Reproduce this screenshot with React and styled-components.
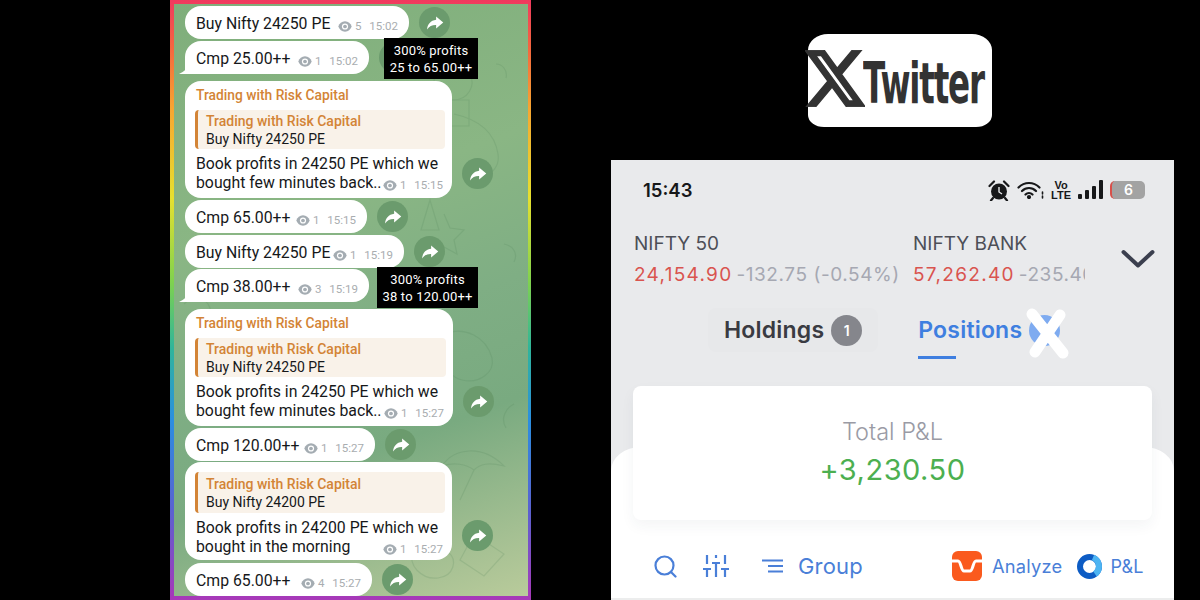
import React from "react"
import styled, { createGlobalStyle } from "styled-components"

const GlobalStyle = createGlobalStyle`
    html, body {
        margin: 0;
        background: #000;
        overflow: hidden;
    }
    * { box-sizing: border-box; }
`

const Page = styled.div`
    width: 1200px;
    height: 600px;
    background: #000;
    display: flex;
    padding-left: 170px;
`

/* left: chat screenshot */
const ChatFrame = styled.div`
    position: relative;
    width: 361px;
    height: 600px;
    padding: 4px 3px 4px 4px;
    background: linear-gradient(180deg, #f0395f 0%, #f4663f 8%, #f7a531 18%, #e6e02f 33%, #7fd24e 47%, #2fb59a 58%, #2b8fe0 70%, #5a62d0 85%, #a838b8 100%);
`

const Chat = styled.div`
    position: relative;
    height: 100%;
    overflow: hidden;
    padding: 2px 0 0 11px;
    font-family: Roboto, "Liberation Sans", sans-serif;
    background: linear-gradient(160deg, #7fae7b 0%, #8ab684 35%, #7fae84 55%, #79aa80 72%, #a3bf92 90%, #b9cb9b 100%);
`

const Doodles = styled.svg`
    position: absolute;
    inset: 0;
    width: 100%;
    height: 100%;
    fill: none;
    stroke: #4c7f55;
    stroke-width: 1.2;
    opacity: 0.17;
`

const Row = styled.div`
    position: relative;
    display: flex;
    align-items: ${({ $tall }) => ($tall ? "flex-end" : "center")};
    gap: 10px;
    margin-top: ${({ $top }) => ($top === undefined ? 2 : $top)}px;
`

const Bubble = styled.div`
    position: relative;
    width: ${({ $w }) => $w}px;
    padding: ${({ $pad }) => $pad || "8px 11px 6px"};
    background: #fff;
    color: #16181a;
    border-radius: 16px;
    border-bottom-left-radius: ${({ $tail }) => ($tail ? "4px" : "16px")};
    font-size: 15.8px;
    line-height: 19px;

    ${({ $tail }) => $tail && `
        &::before {
            content: "";
            position: absolute;
            left: -6px;
            bottom: 0;
            width: 10px;
            height: 12px;
            background: #fff;
            clip-path: path("M10 0 C10 5 5 10 0 12 L10 12 Z");
        }
    `}
`

const Sender = styled.div`
    color: #d38436;
    font-size: 13.8px;
    font-weight: 500;
    line-height: 19px;
    margin-bottom: 5px;
`

const Quote = styled.div`
    padding: ${({ $loose }) => ($loose ? "4px 8px 0" : "2px 8px 0")};
    height: ${({ $loose }) => ($loose ? 41 : 39)}px;
    margin: 0 -2px 5px -1px;
    background: #f9f2e9;
    border-left: 3px solid #d38436;
    border-radius: 4px;
    font-size: 14px;
    line-height: ${({ $loose }) => ($loose ? 17.5 : 18)}px;
`

const QuoteTitle = styled.div`
    color: #d38436;
    font-weight: 500;
`

const Line = styled.div`
    display: flex;
    white-space: nowrap;
`

const Meta = styled.span`
    display: flex;
    align-items: center;
    margin-left: auto;
    padding-top: 6px;
    height: 19px;
    color: #a9adb0;
    font-size: 11.5px;
    line-height: 13px;
`

const Views = styled.span`
    margin: 0 8px 0 3px;
`

const ForwardButton = styled.div`
    flex: none;
    width: 31px;
    height: 31px;
    border-radius: 50%;
    background: #6b9b6d;
    display: flex;
    align-items: center;
    justify-content: center;
    margin-bottom: ${({ $tall }) => ($tall ? "9px" : "0")};
`

const Note = styled.div`
    position: absolute;
    right: 50px;
    top: ${({ $top }) => $top}px;
    width: ${({ $w }) => $w}px;
    height: 41px;
    background: #000;
    color: #fff;
    font-size: 13px;
    font-weight: 400;
    letter-spacing: 0.2px;
    line-height: 17px;
    padding-top: 4px;
    text-align: center;
    white-space: nowrap;
`

const ForwardIcon = () => (
    <svg width="18" height="18" viewBox="0 0 24 24" fill="#fff">
        <path d="M13.5 3.2 23 11.3 13.5 19.4V14.6C8.4 14.4 4.4 16.3 1.4 20.6 2 14 6.2 8.6 13.5 7.8Z" />
    </svg>
)

const EyeIcon = () => (
    <svg width="14" height="11" viewBox="0 0 15 11">
        <path d="M7.5 0C4 0 1.6 2.4 0.3 5.5 1.6 8.6 4 11 7.5 11S13.4 8.6 14.7 5.5C13.4 2.4 11 0 7.5 0Z" fill="#a4acb2" />
        <circle cx="7.5" cy="5.5" r="3.3" fill="#fff" />
        <circle cx="7.5" cy="5.5" r="2" fill="#a4acb2" />
    </svg>
)

const MessageMeta = ({ views, time }) => (
    <Meta>
        <EyeIcon />
        <Views>{views}</Views>
        {time}
    </Meta>
)

/* right: broker app */
const Side = styled.div`
    margin-left: 80px;
    width: 563px;
    display: flex;
    flex-direction: column;
`

const LogoRow = styled.div`
    height: 160px;
    padding: 34px 0 0 197px;
`

const LogoCard = styled.div`
    position: relative;
    width: 184px;
    height: 93px;
    background: #fff;
    border-radius: 20px 20px 16px 16px / 16px 16px 12px 12px;
    display: flex;
    align-items: center;
    padding: 6px 0 0 55px;
`

const LogoMark = styled.svg`
    position: absolute;
    left: -3px;
    top: 16px;
    width: 60px;
    height: 57px;
`

const LogoText = styled.span`
    font-family: "DejaVu Sans", sans-serif;
    font-weight: 700;
    font-size: 44px;
    letter-spacing: -1.6px;
    color: #333;
    transform: scale(0.74, 1.28);
    transform-origin: left center;
`

const Phone = styled.div`
    flex: 1;
    background: #e9eaec;
    font-family: Inter, "Liberation Sans", sans-serif;
    overflow: hidden;
    display: flex;
    flex-direction: column;
`

const StatusBar = styled.div`
    display: flex;
    align-items: center;
    justify-content: space-between;
    height: 24px;
    margin-top: 18px;
    padding: 0 29px 0 32px;
`

const Clock = styled.div`
    font-size: 18.5px;
    font-weight: 600;
    color: #17181a;
`

const StatusIcons = styled.div`
    display: flex;
    align-items: center;
    gap: 7px;
`

const VoLte = styled.div`
    font-family: "Liberation Sans", sans-serif;
    font-size: 11px;
    font-weight: 700;
    line-height: 10px;
    color: #17181a;
    text-align: center;
`

const Battery = styled.div`
    width: 35px;
    height: 18px;
    border-radius: 5px;
    background: #a3a3a3;
    border-left: 2px solid #d8504a;
    color: #fff;
    font-size: 14px;
    font-weight: 600;
    line-height: 18px;
    text-align: center;
`

const Tickers = styled.div`
    display: flex;
    align-items: flex-start;
    margin-top: 31px;
    padding-left: 23px;
`

const Ticker = styled.div`
    flex: none;
    width: ${({ $w }) => $w}px;
    overflow: hidden;
    white-space: nowrap;
`

const TickerName = styled.div`
    color: #4d4f57;
    font-size: 19px;
    line-height: 22px;
`

const TickerValue = styled.div`
    margin-top: 9px;
    font-size: 19px;
    line-height: 22px;
    letter-spacing: 0.56px;
    color: #a6a8b2;
`

const Price = styled.span`
    color: #d9544f;
    letter-spacing: 1.3px;
    margin-right: 4px;
`

const Chevron = styled.svg`
    flex: none;
    margin: 16px 0 0 36px;
`

const Tabs = styled.div`
    display: flex;
    align-items: flex-start;
    margin-top: 22px;
    padding-left: 97px;
`

const Tab = styled.div`
    position: relative;
    display: flex;
    align-items: center;
    gap: 7px;
    height: 44px;
    padding: 0 16px;
    margin-right: ${({ $mr }) => $mr || 0}px;
    font-size: 23px;
    font-weight: 600;
    letter-spacing: 0.2px;
    color: ${({ $active }) => ($active ? "#3f7fe0" : "#3a3b42")};
    background: ${({ $active }) => ($active ? "transparent" : "#e7e8ea")};
    border-radius: 8px;
`

const TabBadge = styled.span`
    width: 31px;
    height: 31px;
    border-radius: 50%;
    background: ${({ $active }) => ($active ? "#7eabf0" : "#85868c")};
    color: #fff;
    font-size: 14px;
    font-weight: 600;
    display: flex;
    align-items: center;
    justify-content: center;
`

const TabLine = styled.div`
    position: absolute;
    left: 16px;
    top: 48px;
    width: 38px;
    height: 3px;
    background: #3f7fe0;
`

const Scribble = styled.svg`
    position: absolute;
    left: 124px;
    top: 0;
    width: 48px;
    height: 58px;
`

const SummaryCard = styled.div`
    position: relative;
    z-index: 1;
    margin: 34px 22px -73px;
    height: 134px;
    background: #fff;
    border-radius: 8px;
    box-shadow: 0 6px 14px rgba(40, 50, 70, 0.05);
    text-align: center;
    padding-top: 32px;
`

const SummaryLabel = styled.div`
    color: #9a9ba5;
    font-size: 23.5px;
    font-weight: 300;
    line-height: 27px;
`

const SummaryValue = styled.div`
    margin-top: 7px;
    color: #4caf50;
    font-size: 29px;
    line-height: 36px;
    letter-spacing: 0.5px;
`

const Sheet = styled.div`
    flex: 1;
    background: #fff;
    border-radius: 30px 30px 0 0 / 24px 24px 0 0;
    border-bottom: 2px solid #eceded;
    display: flex;
    align-items: center;
    padding: 87px 30px 0 43px;
`

const ToolIcon = styled.svg`
    flex: none;
    margin-right: ${({ $mr }) => $mr}px;
    fill: none;
    stroke: #4a7fd8;
`

const ToolMark = styled.svg`
    flex: none;
`

const ToolText = styled.span`
    color: #4a7fd8;
    font-size: ${({ $size }) => $size}px;
    letter-spacing: 0.2px;
    margin: 0 ${({ $mr }) => $mr || 0}px 0 ${({ $ml }) => $ml || 0}px;
    white-space: nowrap;
`

export default function App() {
    return (
        <Page>
            <GlobalStyle />
            <ChatFrame>
                <Chat>
                    <Doodles viewBox="0 0 354 592">
                        <path d="M262 70c8-14 26-14 34 0 6 12-2 26-17 26s-23-14-17-26z" />
                        <path d="M265 96h30v26h-30z" />
                        <path d="M280 110c18 4 40 14 44 40 3 18-18 30-34 22" />
                        <path d="M256 196l-9 30h18l-9-30zM270 210l6 14 14 2-10 10 3 14-13-7" />
                        <path d="M270 330c20-8 42 2 48 24 3 14-12 26-30 22s-30-34-18-46z" />
                        <path d="M10 300c8-8 22-8 26 4s-6 18-20 16" />
                        <path d="M250 405c-2-8 6-14 14-12s12 10 6 16-18 4-20-4z" />
                        <path d="M268 462c12-18 40-22 62 0-16-4-24-2-30 4-8-6-20-8-32-4zM300 466l-14 30" />
                        <path d="M240 548c10-8 24-8 34 0s6 24-10 26-32-14-24-26zM300 530l30 20-20 22-24-16z" />
                        <path d="M322 60c6 0 12 6 10 14M330 240c10 2 14 10 10 18M340 400c-8 4-14 14-8 24" />
                    </Doodles>

                    <Row $top={0}>
                        <Bubble $w={224}>
                            <Line>Buy Nifty 24250 PE<MessageMeta views="5" time="15:02" /></Line>
                        </Bubble>
                        <ForwardButton><ForwardIcon /></ForwardButton>
                    </Row>
                    <Row>
                        <Bubble $w={184} $tail>
                            <Line>Cmp 25.00++<MessageMeta views="1" time="15:02" /></Line>
                        </Bubble>
                        <ForwardButton><ForwardIcon /></ForwardButton>
                        <Note $w={94} $top={-3}>300% profits<br />25 to 65.00++</Note>
                    </Row>

                    <Row $top={7} $tall>
                        <Bubble $w={267} $pad="5px 9px 6px 11px">
                            <Sender>Trading with Risk Capital</Sender>
                            <Quote>
                                <QuoteTitle>Trading with Risk Capital</QuoteTitle>
                                Buy Nifty 24250 PE
                            </Quote>
                            <Line>Book profits in 24250 PE which we</Line>
                            <Line>bought few minutes back..<MessageMeta views="1" time="15:15" /></Line>
                        </Bubble>
                        <ForwardButton $tall><ForwardIcon /></ForwardButton>
                    </Row>

                    <Row>
                        <Bubble $w={182}>
                            <Line>Cmp 65.00++<MessageMeta views="1" time="15:15" /></Line>
                        </Bubble>
                        <ForwardButton><ForwardIcon /></ForwardButton>
                    </Row>
                    <Row>
                        <Bubble $w={219}>
                            <Line>Buy Nifty 24250 PE<MessageMeta views="1" time="15:19" /></Line>
                        </Bubble>
                        <ForwardButton><ForwardIcon /></ForwardButton>
                    </Row>
                    <Row $top={1}>
                        <Bubble $w={184} $tail>
                            <Line>Cmp 38.00++<MessageMeta views="3" time="15:19" /></Line>
                        </Bubble>
                        <Note $w={101} $top={-2}>300% profits<br />38 to 120.00++</Note>
                    </Row>

                    <Row $top={7} $tall>
                        <Bubble $w={268} $pad="5px 9px 6px 11px">
                            <Sender>Trading with Risk Capital</Sender>
                            <Quote>
                                <QuoteTitle>Trading with Risk Capital</QuoteTitle>
                                Buy Nifty 24250 PE
                            </Quote>
                            <Line>Book profits in 24250 PE which we</Line>
                            <Line>bought few minutes back..<MessageMeta views="1" time="15:27" /></Line>
                        </Bubble>
                        <ForwardButton $tall><ForwardIcon /></ForwardButton>
                    </Row>

                    <Row>
                        <Bubble $w={190}>
                            <Line>Cmp 120.00++<MessageMeta views="1" time="15:27" /></Line>
                        </Bubble>
                        <ForwardButton><ForwardIcon /></ForwardButton>
                    </Row>

                    <Row $top={1} $tall>
                        <Bubble $w={267} $pad="10px 9px 4px 11px">
                            <Quote $loose>
                                <QuoteTitle>Trading with Risk Capital</QuoteTitle>
                                Buy Nifty 24200 PE
                            </Quote>
                            <Line>Book profits in 24200 PE which we</Line>
                            <Line>bought in the morning<MessageMeta views="1" time="15:27" /></Line>
                        </Bubble>
                        <ForwardButton $tall><ForwardIcon /></ForwardButton>
                    </Row>

                    <Row $top={3}>
                        <Bubble $w={187}>
                            <Line>Cmp 65.00++<MessageMeta views="4" time="15:27" /></Line>
                        </Bubble>
                        <ForwardButton><ForwardIcon /></ForwardButton>
                    </Row>
                </Chat>
            </ChatFrame>

            <Side>
                <LogoRow>
                    <LogoCard>
                        <LogoMark viewBox="1.2 2.2 21.6 19.6" preserveAspectRatio="none">
                            <path fill="#333" stroke="#333" strokeWidth="0.5" d="M18.244 2.25h3.308l-7.227 8.26 8.502 11.24H16.17l-5.214-6.817L4.99 21.75H1.68l7.73-8.835L1.254 2.25H8.08l4.713 6.231zm-1.161 17.52h1.833L7.084 4.126H5.117z" />
                        </LogoMark>
                        <LogoText>Twitter</LogoText>
                    </LogoCard>
                </LogoRow>

                <Phone>
                    <StatusBar>
                        <Clock>15:43</Clock>
                        <StatusIcons>
                            <svg width="22" height="21" viewBox="0 0 22 21">
                                <circle cx="11" cy="11.5" r="8" fill="#17181a" />
                                <path d="M11 7v5l3 2" stroke="#e9eaec" strokeWidth="1.4" fill="none" />
                                <path d="M1.5 6 6 1.5M20.5 6 16 1.5M5 18l-2 2.5M17 18l2 2.5" stroke="#17181a" strokeWidth="2.2" strokeLinecap="round" />
                            </svg>
                            <svg width="27" height="18" viewBox="0 0 27 18" fill="none" stroke="#17181a" strokeWidth="2.2" strokeLinecap="round">
                                <path d="M1.5 6.5c6-6 15-6 21 0M5 10c4-4 10-4 14 0M8.5 13.5c2-2 5-2 7 0" />
                                <circle cx="12" cy="16" r="1" fill="#17181a" />
                                <path d="M25.5 11v2M25.5 15v2" strokeWidth="1.6" />
                            </svg>
                            <VoLte>Vo<br />LTE</VoLte>
                            <svg width="25" height="20" viewBox="0 0 25 20" fill="#17181a">
                                <rect x="0" y="14" width="4" height="5" rx="1" />
                                <rect x="7" y="10" width="4" height="9" rx="1" />
                                <rect x="14" y="6" width="4" height="13" rx="1" />
                                <rect x="21" y="0" width="4" height="19" rx="1" />
                            </svg>
                            <Battery>6</Battery>
                        </StatusIcons>
                    </StatusBar>

                    <Tickers>
                        <Ticker $w={279}>
                            <TickerName>NIFTY 50</TickerName>
                            <TickerValue><Price>24,154.90</Price>-132.75 (-0.54%)</TickerValue>
                        </Ticker>
                        <Ticker $w={172}>
                            <TickerName>NIFTY BANK</TickerName>
                            <TickerValue><Price>57,262.40</Price>-235.40 (-0.41%)</TickerValue>
                        </Ticker>
                        <Chevron width="34" height="20" viewBox="0 0 34 20" fill="none" stroke="#3b3f4e" strokeWidth="4" strokeLinecap="round" strokeLinejoin="round">
                            <path d="M2.5 3 17 16.5 31.5 3" />
                        </Chevron>
                    </Tickers>

                    <Tabs>
                        <Tab $mr={24}>Holdings<TabBadge>1</TabBadge></Tab>
                        <Tab $active>
                            Positions
                            <TabBadge $active />
                            <TabLine />
                            <Scribble viewBox="0 0 48 58" fill="none" stroke="#fff" strokeWidth="11" strokeLinecap="round">
                                <path d="M6 6 37 45M34 7 9 44" />
                            </Scribble>
                        </Tab>
                    </Tabs>

                    <SummaryCard>
                        <SummaryLabel>Total P&amp;L</SummaryLabel>
                        <SummaryValue>+3,230.50</SummaryValue>
                    </SummaryCard>

                    <Sheet>
                        <ToolIcon $mr={26} width="23" height="23" viewBox="0 0 23 23" strokeWidth="2.2" strokeLinecap="round">
                            <circle cx="10.5" cy="10.5" r="9" />
                            <path d="M17 17l4.5 4.5" />
                        </ToolIcon>
                        <ToolIcon $mr={33} width="26" height="24" viewBox="0 0 26 24" strokeWidth="2.2">
                            <path d="M4 1v9M4 15v8M13 1v3M13 9v14M22 1v9M22 15v8M0 15h8M9 9h8M18 15h8" />
                        </ToolIcon>
                        <ToolIcon $mr={15} width="21" height="14" viewBox="0 0 21 14" strokeWidth="2.2">
                            <path d="M0 1.5h21M6 7h15M6 12.5h15" />
                        </ToolIcon>
                        <ToolText $size={22} $mr={89}>Group</ToolText>
                        <ToolMark width="30" height="30" viewBox="0 0 30 30">
                            <rect width="30" height="30" rx="6" fill="#fa5a1e" />
                            <path d="M0 10h6c3 0 3 10 6 10h6c3 0 3-10 6-10h6" fill="none" stroke="#fff" strokeWidth="3" />
                        </ToolMark>
                        <ToolText $size={18.3} $ml={10} $mr={15}>Analyze</ToolText>
                        <ToolMark width="25" height="25" viewBox="0 0 25 25" fill="none" strokeWidth="6">
                            <circle cx="12.5" cy="12.5" r="9.5" stroke="#0d5cc4" />
                            <path d="M16 3.5A9.5 9.5 0 0 1 18 20" stroke="#4db4f2" />
                        </ToolMark>
                        <ToolText $size={18} $ml={8}>P&amp;L</ToolText>
                    </Sheet>
                </Phone>
            </Side>
        </Page>
    )
}
